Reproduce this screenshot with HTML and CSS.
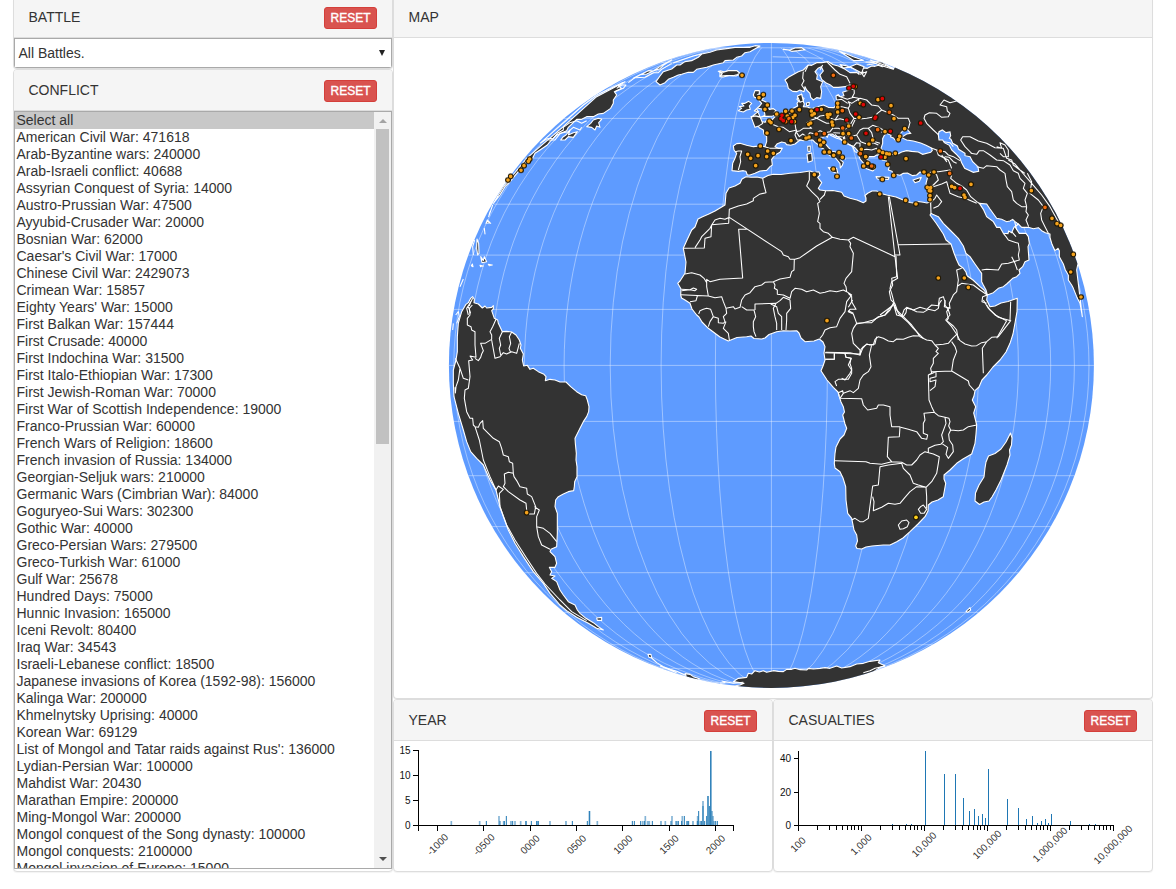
FILE: index.html
```html
<!DOCTYPE html>
<html lang="en">
<head>
<meta charset="utf-8">
<title>Battles</title>
<link rel="stylesheet" href="styles.css">
</head>
<body>
<main class="dashboard">
  <aside class="filters">
    <section class="panel panel-cut">
      <header class="panel-head head-cut"><h2>BATTLE</h2><button class="reset">RESET</button></header>
      <div class="dropdown"><span>All Battles.</span><i class="caret"></i></div>
    </section>
    <section class="panel conflict">
      <header class="panel-head"><h2>CONFLICT</h2><button class="reset">RESET</button></header>
      <div class="listbox">
        <ul class="options">
          <li class="selected">Select all</li><li>American Civil War: 471618</li><li>Arab-Byzantine wars: 240000</li><li>Arab-Israeli conflict: 40688</li><li>Assyrian Conquest of Syria: 14000</li><li>Austro-Prussian War: 47500</li><li>Ayyubid-Crusader War: 20000</li><li>Bosnian War: 62000</li><li>Caesar's Civil War: 17000</li><li>Chinese Civil War: 2429073</li><li>Crimean War: 15857</li><li>Eighty Years' War: 15000</li><li>First Balkan War: 157444</li><li>First Crusade: 40000</li><li>First Indochina War: 31500</li><li>First Italo-Ethiopian War: 17300</li><li>First Jewish-Roman War: 70000</li><li>First War of Scottish Independence: 19000</li><li>Franco-Prussian War: 60000</li><li>French Wars of Religion: 18600</li><li>French invasion of Russia: 134000</li><li>Georgian-Seljuk wars: 210000</li><li>Germanic Wars (Cimbrian War): 84000</li><li>Goguryeo-Sui Wars: 302300</li><li>Gothic War: 40000</li><li>Greco-Persian Wars: 279500</li><li>Greco-Turkish War: 61000</li><li>Gulf War: 25678</li><li>Hundred Days: 75000</li><li>Hunnic Invasion: 165000</li><li>Iceni Revolt: 80400</li><li>Iraq War: 34543</li><li>Israeli-Lebanese conflict: 18500</li><li>Japanese invasions of Korea (1592-98): 156000</li><li>Kalinga War: 200000</li><li>Khmelnytsky Uprising: 40000</li><li>Korean War: 69129</li><li>List of Mongol and Tatar raids against Rus': 136000</li><li>Lydian-Persian War: 100000</li><li>Mahdist War: 20430</li><li>Marathan Empire: 200000</li><li>Ming-Mongol War: 200000</li><li>Mongol conquest of the Song dynasty: 100000</li><li>Mongol conquests: 2100000</li><li>Mongol invasion of Europe: 15000</li>
        </ul>
        <div class="scrollbar"><i class="up"></i><b class="thumb"></b><i class="down"></i></div>
      </div>
    </section>
  </aside>
  <div class="views">
    <section class="panel panel-cut map">
      <header class="panel-head head-cut"><h2>MAP</h2></header>
      <svg class="globe" viewBox="394 38 758 660" width="758" height="660">
        <defs>
          <clipPath id="sphere"><circle cx="771.4" cy="365.4" r="322.5"/></clipPath>
          <clipPath id="lat80"><rect x="440" y="47.8" width="660" height="635.2"/></clipPath>
        </defs>
        <circle class="sea" cx="771.4" cy="365.4" r="322.5"/>
        <g class="grid" clip-path="url(#lat80)">
          <ellipse cx="771.4" cy="365.4" rx="56" ry="322.5"/><ellipse cx="771.4" cy="365.4" rx="110.3" ry="322.5"/><ellipse cx="771.4" cy="365.4" rx="161.2" ry="322.5"/><ellipse cx="771.4" cy="365.4" rx="207.3" ry="322.5"/><ellipse cx="771.4" cy="365.4" rx="247" ry="322.5"/><ellipse cx="771.4" cy="365.4" rx="279.3" ry="322.5"/><ellipse cx="771.4" cy="365.4" rx="303" ry="322.5"/><ellipse cx="771.4" cy="365.4" rx="317.6" ry="322.5"/>
        </g>
        <path class="grid" d="M771.4 43V688M449 365.4H1094M453.8 309.4H1089M453.8 421.4H1089M468.4 255.1H1074.4M468.4 475.7H1074.4M492.1 204.2H1050.7M492.1 526.6H1050.7M524.4 158.1H1018.4M524.4 572.7H1018.4M564.1 118.4H978.7M564.1 612.4H978.7M610.2 86.1H932.6M610.2 644.7H932.6M661.1 62.4H881.7M661.1 668.4H881.7M715.4 47.8H827.4M715.4 683H827.4"/>
        <g clip-path="url(#sphere)">
          <path class="land thin-line" d="M746 176.7L751 177.3 757 177 762.7 178.3 768 175.5 773.3 174.3 781 174.5 790 173.3 800 172.5 810 171 814 172.5 819 171.8 820 175 817.7 177.3 821.7 182.7 818.3 188.3 820 190 825.7 190.7 833 190.5 841.7 192.3 844 196 850 198.3 857 200 863.3 202.7 866 201 866 198 865 195.5 867.7 193.3 872 191 876.7 191 881 193.5 886.7 195 896 197 905 200.7 910 202.5 915 203.3 918 201.5 923.3 202.3 927 203 930.7 201.7 932 212 930 215 936 223 943.3 234 946 240 951 244 954 253 956.7 260 959 265 963.3 268.3 966 272 967 275.7 973 280 980 286.7 984 290 987.3 295 986.7 300 990 306.7 995 306 1001 303 1008 301.5 1017.3 298.3 1017 311.7 1015 323 1013 334 1010 343.3 1006 352 1000 360 993 367 986.7 375 982 380 979 387 975 390.7 974 396 972.3 400 975.7 406.7 973.7 413 975.5 420 976.7 425 976 434 975 443.3 971.7 454 963 459 956.7 463.3 950 470 944 475 944 479 945.7 483.3 944.5 490 943.3 496.7 938 500 932 502 928.3 505 928 511 925 516.7 918 524 910 531.7 903 538 896.7 541.7 890 545 883.3 545 872 546 866 547 861.7 549 857 548.5 855.7 546 857.5 541 856.7 535 854 530 851.7 518.3 847.7 513.3 846 500 845.7 486.7 843 478 840 471.7 835 468 834.3 463.3 835 453.3 836 447 840 439 844 435 846.7 428.3 845 424 842.7 415 844.5 412 843.3 406.7 841 402 839.3 396.7 838 392 833.3 387.3 827 380 821 370.7 823 366 825 360 824 353 825 346.7 823 342 819.3 339 814 341 805 341.7 801 338 799 333 796.7 330.7 790 331 783.3 330.7 776.7 331.7 769 334.5 765 338 761.7 339 754 338.5 751 336 746.7 336.7 737 337.5 728.3 341 720 337 708.3 328.3 702 322 699 317 696.7 315 692 309 690 303.3 685 300 681.5 298 680.7 295 681 289 677.7 283.3 680 281 685 273.3 686 262 683.3 248.3 687 240 691.7 230 695 227 698 219 702 217 708.3 214.3 715 211 725 205 726 193.3 729 188 735 186 740 183.3 742 179Z"/>
          <g transform="translate(720 40) scale(.33333)">
            <path class="land" d="M632 487L626 470 621 445 618 430 622 415 620 405 610 399 600 396 590 405 578 407 562 399 550 400 540 406 520 402 516 394 505 390 508 380 500 372 500 363 487 360 480 346 470 345 462 350 448 350 440 358 449 364 440 368 452 374 454 382 467 385 458 393 440 386 427 381 431 370 420 357 416 345 415 335 406 324 397 318 380 311 370 303 355 291 345 288 337 282 325 283 322 292 316 285 311 291 302 292 303 303 314 309 325 322 336 334 348 336 352 343 365 345 376 357 364 352 361 359 370 367 367 376 361 384 360 371 354 363 343 350 330 347 320 340 310 326 300 322 292 312 285 307 278 300 268 299 250 302 240 300 225 312 212 316 200 314 195 308 185 306 172 311 165 320 175 325 187 325 180 337 165 345 155 358 157 375 150 380 140 391 120 393 105 400 90 405 82 405 78 394 70 392 55 394 36 392 38 370 45 355 50 340 42 330 40 318 50 311 60 310 80 316 100 320 118 318 135 320 140 305 140 290 132 282 130 270 118 263 112 256 102 253 112 249 125 252 128 245 135 247 140 240 155 241 165 230 180 226 190 215 200 212 210 212 220 205 233 198 231 190 236 183 231 178 236 168 245 163 245 172 252 175 249 182 253 192 250 200 262 201 275 206 290 201 310 195 325 202 342 203 350 195 348 187 356 185 349 177 348 168 355 164 360 170 372 167 368 157 388 150 402 146 401 137 389 135 375 140 355 142 340 142 330 134 320 130 305 118 300 105 310 93 304 80 294 85 285 95 292 105 290 118 308 125 302 140 305 155 302 175 290 173 280 180 272 172 270 160 260 150 255 140 252 155 240 150 230 155 218 154 205 145 202 132 195 120 205 112 235 95 250 90 265 75 275 76 290 68 305 68 325 65 340 74 355 78 372 86 390 98 410 97 417 103 417 90 400 82 385 82 370 84 360 74 378 77 396 84 412 88 430 98 425 90 430 84 442 85 455 78 465 79 475 76 487 80 497 78 520 86 560 50 900 50 1190 500 1080 640 1070 690 1087 830 1085 818 1080 790 1070 770 1060 745 1055 735 1045 720 1045 705 1036 690 1030 672 1018 650 1018 632 1014 625 1005 632 996 613 990 592 990 582 976 578 965 572 955 563 940 566 925 562 905 562 895 552 885 560 890 568 898 580 918 580 925 590 928 610 924 620 927 660 915 665 908 680 897 690 900 700 890 710 878 715 860 732 850 740 835 745 820 758 802 765 798 750 790 735 785 725 785 700 765 672 750 650 738 640 730 618 715 595 690 570 670 550 655 530 638 523 633 520Z"/>
            <path class="land" d="M128 250L118 257 105 262 93 230 110 228 123 231 135 226 133 215 138 205 125 207 112 204 119 198 125 190 112 175 103 172 100 165 105 152 118 152 118 161 112 165 122 162 132 165 132 172 125 180 138 186 142 195 148 208 160 206 168 212 163 218 168 225 158 228 145 229 132 229 120 232 106 228 95 231 108 220 116 214 103 213 110 206Z M55 212L65 205 58 200 72 198 65 190 75 190 86 184 95 190 88 198 91 208 80 210 70 216Z M232 168L245 163 250 183 240 187Z M259 189L268 187 267 196 260 197Z M263 319L271 318 270 335 264 334Z M261 343L275 339 277 362 264 367Z M325 383L350 385 354 401 335 394Z M579 420L604 412 598 424 585 428Z M468 410L507 412 505 418 472 417Z M0 92L12 95 25 92 38 95 50 92 62 102 48 108 30 106 10 111 0 110Z M190 28L210 30 225 24 245 23 255 29 235 32 215 34 205 30Z M358 34L380 42 400 50 430 61 402 62 380 48Z M390 80L425 99 432 80 410 72Z M438 66L460 68 480 75 500 82 520 88 485 65Z"/>
            <path class="lake" d="M483 325L488 310 488 296 493 286 500 280 513 286 512 291 520 294 528 303 535 303 533 298 543 292 560 300 580 303 602 309 618 316 634 324 637 331 632 337 608 343 595 336 575 334 560 332 545 336 535 341 520 344 505 340 497 341Z M540 282L548 273 562 268 565 272 572 280 560 282 548 290Z M655 284L657 275 667 270 678 278 690 276 692 287 688 295 693 298 698 310 712 318 716 328 735 340 735 347 750 350 758 365 774 380 776 394 760 397 745 390 734 385 725 368 720 355 708 342 695 330 688 316 673 308 668 300 657 300Z M778 490L800 492 810 507 830 535 845 538 860 545 870 543 878 538 885 545 895 552 882 562 875 578 866 573 864 581 850 580 840 562 830 562 820 545 800 530 790 508Z"/>
            <path class="border" d="M45 335L55 333 65 333 60 350 62 365 55 390M135 320L148 325 165 325 187 325M140 245L155 252 175 260 190 262 208 275 230 270 225 285 232 300 245 300M180 225L188 235 200 240 210 247 225 250 228 270M220 205L215 215 205 225 205 245M275 206L272 225 290 235 275 240 260 248 267 258 275 265 250 265 240 272 228 275 238 290 248 282 260 290 270 278 285 282 300 272 315 278 330 275 338 265 335 250 320 250 310 245 290 235 300 228 320 225 332 235 345 240 360 236 375 240 390 255 380 265 370 270 355 265 340 265M345 200L350 212 355 225 345 240M342 200L365 200 385 205 390 220 402 235 420 237 440 235 465 230 472 220 485 210 475 198 455 195 450 190 440 180 420 175 408 182 395 190 385 185 390 195 385 205M390 255L402 235M340 278L370 280 390 290 410 285 420 270 430 265 445 265 455 278 458 290 465 305 480 310M410 285L422 305 440 312 460 308 475 315M370 270L372 282 375 300 385 312 400 320 410 308 420 310 420 322 425 330 440 328 455 330 470 325 475 345M330 285L350 295 360 298 372 305 370 290M397 318L405 335 415 338 425 330M345 283L352 290 370 290M445 265L458 256 475 262 490 270 485 278M405 240L395 260M485 210L505 218 520 225 535 235 565 235 570 248 565 265M350 165L365 172 382 178 400 172 415 175 418 190M352 180L365 178 383 190M402 146L403 160 395 175M308 75L300 90M320 65L345 90 360 103 380 110 385 120 390 130M250 95L248 115 252 122 245 135 255 150M265 75L255 95M620 405L635 395 655 395 690 390 695 405 692 415 710 430 725 438 740 450 752 470 770 485 778 490M640 395L650 405 655 420 640 435 630 440M634 324L650 330 655 345 665 350 685 360 690 372 695 385M650 330L675 335 685 345 700 350 720 362M675 350L688 352 700 365 710 370M665 345L680 365 672 350M632 487L645 475 650 465 665 485 655 498 640 505M625 455L640 440 665 432 680 425 690 460 715 470 735 475 770 490M770 380L790 385 800 377 830 380 840 390 855 400 858 420 862 440 875 455 880 480 890 490 905 500 920 500 918 515 925 525 918 540 926 560M752 340L770 343 778 332 790 332 810 345 830 360 850 362 870 375 880 392 895 400 900 415 915 430 910 445 922 460 915 480 920 500M755 340L735 320 722 300 728 290 750 290 775 303 800 310 825 323 850 325 855 340 860 355 875 360 880 375 900 390 915 400M700 320L690 308 672 305M655 284L640 270 620 250 612 235 615 225 628 218 650 220 665 232 685 230 690 220 682 213 680 200 660 195 672 180 690 188 710 183 740 200 760 217 795 240M922 400L935 425 930 460 955 480 970 500 962 520 965 540 975 560 985 580M865 360L885 372 900 390 935 430 965 465 990 500 1015 545 1020 560M830 320L845 325 840 308 855 315 865 330 865 350 850 350 840 340M785 690L800 688 835 690 845 672 865 670 898 660 895 645 898 630 895 610 880 605 865 600 858 590 850 580M875 575L888 590M875 650L885 670 892 690M890 570L884 545M420 103L440 95 432 110 425 99M440 75L470 70M450 60L520 85"/>
            <path class="border faint" d="M158 50L310 55M0 45Q80 12 120 22"/>
          </g>
          <g class="border" transform="translate(640 160) scale(.33333)">
            <path d="M368 55L372 75 378 98 358 103 340 115 340 122 320 132 295 138 268 148 266 190 215 194 213 230 195 235 193 264 130 265M268 172L255 178 240 175 225 180 215 195 210 205 195 220 185 230 180 240 165 263M268 172L425 275 430 285 445 290 450 298 465 298 480 293 530 258 577 232 565 220 550 215 540 205 540 190 533 185 538 160 533 130 540 125 533 112 515 95 500 78 508 60 508 35M540 118L553 105 557 92M320 208L296 208 308 354 240 358 210 365 200 358 200 380 205 408 225 413 245 410 250 425 258 445 280 440 285 447 300 442 305 420 315 405 330 398 345 380 365 375 375 367 400 365 420 357 450 352 455 335 462 330 463 298M135 342L155 338 180 345 192 355 200 368M124 388L150 389 160 384 170 388 165 392 150 389 125 392M122 404L205 408M150 425L168 422 172 408M176 462L180 452 190 448 200 445 212 448 220 470 210 485 205 500M220 470L235 475 235 488 250 490 255 485 250 470 260 460 258 445M258 485L250 505 265 520 268 540M305 440L320 450 342 450 347 470 340 485 340 500 342 515 348 530M345 450L345 432 408 430 400 445 405 470 410 490 410 510M392 432L410 440 415 460 425 470 425 510M438 510L440 480 440 460 452 445 450 420 430 412 420 422 408 430M400 365L405 375 403 385 412 390 412 403 430 405 450 415 455 395 465 385 485 388 500 395 520 390 540 400 555 397 570 392 590 395 610 390 620 395 618 380 612 370 618 355 635 335 640 280 630 260 632 250 625 240 600 238 577 232M625 240L640 232 765 290 745 110M765 290L773 355 755 365 750 385 755 400 763 430M620 395L635 405 620 425 615 455 600 475 590 500 570 503 555 510 548 525 540 535M625 400L635 410 635 425 648 448 630 448 625 455 640 462 650 490M650 490L670 488 700 480 715 472 735 465 745 450 763 430M650 490L640 505 635 520 640 550 660 570 660 585 668 565 680 552 690 555 705 552 710 530M555 578L660 582M555 598L583 598 583 578M615 580L618 592 634 595 625 615 635 630 630 640 615 660 605 655"/>
          </g>
          <g class="border" transform="translate(800 300) scale(.33333)">
            <path d="M77 157L150 158 180 165 183 148 190 140 200 133 220 135 225 118 235 110 250 115 265 123 280 125 290 117 310 118 325 112 340 107 358 108M145 22L158 0M160 40L145 32M168 72L190 68 215 68 235 50 255 45 270 30 280 10 290 30 310 50 335 75 350 95 360 110 380 120 395 122 405 135 430 133 445 130 455 118 470 103 480 122 495 132 515 138 530 137 545 128 560 125 575 112 595 110 632 62 595 52 565 25 550 0M280 10L290 45 310 50 318 38 320 25 335 28 350 35 370 37 385 28 405 32 415 25 418 10 425 0M435 0L435 15 445 30 450 45 437 60 455 80 470 103M215 135L208 165 213 200 205 215 190 225 180 240 175 265 160 278 150 272 130 280 120 295 185 296 190 315 203 330 230 325 235 315 250 315 270 320 270 345 275 380 300 380 298 410 265 412 262 470 275 485 245 493 210 490 198 485 105 482M77 178L103 178 103 157M135 160L138 172 153 175 150 190 155 205 155 220 145 238 115 238 105 245 110 258M118 290L115 278 128 272 130 282M405 135L415 145 408 155 415 160 400 175 400 190 392 205 395 220 385 225 387 300 395 320 403 337 372 340 375 360 370 370 370 400 383 405 380 418 365 415 350 395 325 388 302 382M455 125L465 140 470 155 460 180 455 213 395 215M455 213L505 243 508 255 523 272M560 125L547 145 550 220M385 225L408 215 408 230 390 235 390 245 408 240 405 260 390 272M403 337L415 347 435 352 438 370 425 405 430 425 422 433 405 436 385 445 385 460M435 352L447 355 450 365 446 378 452 390 475 392 490 390 505 380 530 375M452 390L446 403 448 420 458 435 460 455 445 475 438 463 443 442 425 430M262 470L275 485 305 487 320 495 335 495 350 480 360 465 375 455 400 462 418 470 415 490 410 520 395 545 378 562 355 555 340 550 330 525 310 505 305 490 265 495 240 500 235 555 218 558 205 655 190 665 180 665 165 655 155 660M218 590L222 605 220 632 245 622 265 610 285 613 300 610 315 592 330 575 350 560 378 562 380 590 380 625M355 628L362 620 370 615 380 628 372 640 362 640ZM295 675L305 663 320 660 327 668 322 680 310 686 300 688Z"/>
          </g>
          <g class="border" transform="translate(880 40) scale(.33333)">
            <path d="M55 614L213 612M28 470L60 645 43 645M48 648L50 710 35 715 38 735 28 755 33 780 45 792 55 820 65 830 72 810 80 802 100 810 120 802 140 808 155 795 175 797 178 775 190 770 195 785 193 800 210 805 208 790 220 765 230 755 235 720 230 690 245 685M233 738L245 730 260 732 280 735 300 750 322 765M210 800L200 815 205 835 200 842 220 858 230 870 235 900M320 795L330 810 345 825 380 842M40 795L20 810 0 825M65 830L85 848 100 865 130 895M380 842L350 895M392 785L390 842M322 765L308 770 306 785 320 790"/>
          </g>
          <g transform="translate(440 280) scale(.33333)">
            <path class="land" d="M78 73L85 68 92 55 98 50 103 58 102 68 115 72 127 84 135 78 140 84 155 82 160 77 160 87 155 92 163 115 173 120 175 130 187 155 200 154 215 156 228 165 238 180 243 195 241 205 250 222 247 240 251 258 262 256 270 268 280 265 295 275 312 283 318 290 316 302 330 298 345 300 360 306 378 306 392 320 410 335 425 344 437 347 442 360 447 380 446 395 440 410 430 425 420 445 405 475 406 490 409 520 408 540 411 560 411 590 404 605 403 620 401 632 385 635 370 642 355 650 347 660 345 680 352 700 352 720 352 760 350 800 333 808 330 815 345 830 350 850 345 862 328 862 335 875 330 885 345 888 335 895 350 905 360 930 370 945 385 965 405 975 412 990 420 1000 438 1015 460 1028 475 1040 490 1050 470 1045 445 1030 410 1012 380 992 360 975 330 940 310 910 280 875 250 830 225 790 205 750 190 710 180 680 168 630 150 600 130 555 110 535 92 515 80 485 70 450 55 400 42 350 40 310 40 270 48 240 52 215 52 170 55 130 65 95Z M470 1014L485 1012 485 1021 472 1021Z"/>
            <path class="border" d="M97 75L88 85 90 105 82 115 82 135 93 140 95 150 105 155 105 195 108 232 90 228 98 240 86 242 90 290 85 325 75 330 73 355 80 395 90 415 98 415 100 435 105 440 115 442 120 430 128 422 130 445 145 460 160 475 178 485 185 505 190 525 205 530 208 545 218 550 220 580 205 577 193 582 195 610 190 620 205 635 240 660 258 670 260 690 268 702 283 702 287 680 275 650 262 642 260 625 240 620 232 605 222 590 220 580M105 235L115 242 122 232 125 222 130 212 122 190 135 190 155 178 155 165 150 155 158 140 168 118M155 180L165 235 180 230 190 218 200 222 215 215 230 220 238 190M187 155L178 175 182 195 178 205 182 225M215 156L208 170 212 190 207 205 212 218M46 235L60 265 70 295 85 300M46 340L48 320 55 300 60 265M105 440L118 480 130 540 150 590 168 630 175 618 190 628 178 640 180 680 200 735 225 780 260 835 290 880 315 912 360 960 395 995 440 1022M283 680L298 690 290 710 290 740 310 745 330 760 350 785M290 740L295 770 305 795 330 808M45 322L46 340M88 78L92 65"/>
          </g>
          <g transform="translate(440 40) scale(.33333)">
            <path class="land" d="M960 18L945 17 930 22 905 22 885 22 865 25 830 30 810 37 785 42 775 52 755 62 735 65 720 75 710 75 695 87 670 95 660 108 648 125 660 135 675 128 685 118 700 112 715 105 725 103 745 97 760 97 770 88 800 82 820 75 850 68 855 62 880 60 890 52 905 48 915 38 930 35Z M835 94L850 97 865 92 890 92 900 100 890 104 880 107 860 107 840 108 847 101Z M580 115L600 104 620 102 640 93 625 92Z M640 93L660 86 670 76 695 60 665 76Z M160 490L190 440 260 355 300 320 370 260 470 170 555 125 535 138 545 145 523 155 530 165 520 180 520 190 512 205 490 220 475 222 460 230 440 230 425 238 410 238 385 262 380 272 350 285 330 305 322 315 300 330 285 340 275 360 260 365 235 395 210 425 195 440 180 465Z M362 300L370 290 378 285 390 270 385 285 400 278 412 275 400 292 385 290 375 300Z M440 260L452 250 460 240 475 235 485 238 476 248 480 262 470 258 465 270 455 262Z M111 597L116 610 117 640 113 645 110 625Z M122 650L130 662 133 650 140 665 126 668Z M142 540L152 550 146 548 138 550Z M133 565L135 582Z M97 672L99 680 94 677Z M120 676L130 678 122 680Z M145 673L157 675 148 677Z"/>
            <path class="border" d="M300 310L322 296 340 295 352 280 370 270 370 262 390 248 410 242 425 250 440 242M325 300L345 300 360 280 385 275 400 262 420 270 425 262M530 145L545 135 558 135 550 145 525 155M565 128L585 113 615 112 640 98 655 98 665 88 695 70M700 68L760 48 785 42M300 310L340 275 380 240 430 195 470 165 550 127M150 515L146 530 158 495M70 717L60 740M47 825L55 815 58 830 50 850M85 825L80 805 93 785 98 775M85 800L92 820M40 850L38 870M100 645L98 620 104 600"/>
          </g>
          <path class="land" d="M1010.5 433L1012 438 1011.5 445 1009.5 450 1010 455 1007 465 1001 480 996 490 992 497 989 501 984 502 979.5 504.5 975 501 975.5 493 979 485 984 477 985 468 986 462 988.5 456 995 453.5 1001 449 1006 442Z"/>
          <g transform="translate(640 560) scale(.33333)">
            <path class="land" d="M280 365L295 355 320 352 325 340 335 342 345 332 358 336 370 332 380 337 400 332 415 334 430 335 440 328 455 328 465 325 480 329 500 330 505 325 520 327 540 325 555 323 570 325 590 318 605 324 630 320 650 312 670 310 690 304 720 300 715 308 735 317 720 322 680 350 600 390 200 390 300 375 312 370Z M135 341L150 343 160 350 178 356 165 364 140 352Z M24 283L33 283 35 294 27 292Z M978 154L990 143 992 150 983 157Z"/>
            <path class="border" d="M35 294L50 308 70 320 90 328 110 334 135 345M60 318L110 338M245 362L255 368 240 370M250 364L280 370 310 367M670 338L690 332 705 325 735 318"/>
          </g>
        </g>
        <g class="dots">
          <g transform="translate(720 40) scale(.33333)">
            <path d="M66 106h0M130 164h0M117 173h0M142 195h0M135 208h0M148 243h0M153 248h0M141 279h0M177 268h0M213 302h0M121 318h0M143 333h0M160 340h0M140 350h0M114 347h0M92 355h0M83 343h0M107 377h0M170 222h0M197 214h0M216 213h0M238 209h0M202 228h0M218 233h0M225 226h0M223 245h0M274 213h0M283 221h0M304 208h0M276 225h0M353 190h0M353 201h0M353 216h0M330 223h0M322 224h0M324 232h0M336 246h0M338 255h0M266 253h0M272 249h0M267 291h0M258 294h0M299 300h0M311 307h0M302 315h0M313 336h0M328 336h0M341 346h0M357 338h0M367 352h0M340 387h0M351 409h0M283 404h0M386 258h0M369 281h0M386 281h0M374 306h0M424 328h0M447 312h0M437 350h0M443 370h0M431 378h0M460 380h0M487 418h0M521 406h0M503 373h0M558 356h0M477 333h0M488 338h0M500 341h0M508 342h0M526 340h0M495 352h0M458 300h0M554 266h0M539 289h0M535 299h0M495 275h0M417 232h0M421 190h0M405 140h0M474 179h0M513 197h0M522 236h0M612 396h0M626 405h0M642 396h0M479 462h0M557 481h0M588 492h0M622 442h0M632 443h0M628 452h0M632 453h0M630 467h0M630 479h0M753 433h0M695 439h0M732 465h0M735 472h0M704 443h0M655 714h0M733 714h0M745 742h0M934 452h0M996 535h0M1011 551h0M1022 556h0M1060 643h0M1052 696h0M1083 771h0"/>
            <path class="warm" d="M340 106h0M197 245h0M207 236h0M289 282h0M313 281h0M368 264h0M394 294h0M367 212h0M421 341h0M455 378h0M473 269h0M508 217h0M661 333h0M689 400h0M975 502h0"/>
            <path class="hot" d="M387 144h0M400 139h0M186 226h0M183 236h0M190 242h0M215 245h0M291 209h0M380 240h0M430 194h0M487 176h0M407 222h0M467 231h0M465 235h0M438 280h0M483 351h0M511 274h0M602 249h0M720 445h0"/>
          </g>
          <path transform="translate(440 40) scale(.33333)" d="M269 357h0M265 364h0M252 377h0M243 391h0M212 409h0M204 420h0"/>
          <path transform="translate(800 300) scale(.33333)" d="M81 62h0"/>
          <path class="yellow" transform="translate(800 300) scale(.33333)" d="M348 652h0"/>
          <path transform="translate(440 280) scale(.33333)" d="M260 698h0"/>
        </g>
      </svg>
    </section>
    <div class="charts">
      <section class="panel">
        <header class="panel-head"><h2>YEAR</h2><button class="reset">RESET</button></header>
        <svg class="chart" viewBox="394 741 378 129" width="378" height="129">
          <g transform="translate(394 690) scale(.33333)">
            <path class="bar soft" d="M172 393V406M257 393V406M315 378V406M380 393V406M396 393V406M430 393V406M468 393V406M586 363V406M610 393V406M754 378V406M761 393V406M746 393V406M766 393V406M814 393V406M834 378V406M865 378V406M927 333V406M911 378V406M942 318V406M951 183V406M957 378V406M363 393V406M329 393V406M849 393V406M880 393V406M919 393V406"/>
            <path class="bar" d="M277 393V406M318 393V406M331 393V406M337 378V406M351 393V406M356 393V406M396 393V406M412 393V406M428 393V406M433 393V406M516 393V406M535 393V406M580 393V406M587 363V406M715 393V406M721 393V406M740 393V406M751 393V406M775 393V406M801 393V406M831 393V406M846 393V406M853 393V406M863 393V406M871 378V406M879 393V406M884 393V406M897 393V406M910 393V406M914 363V406M922 393V406M927 348V406M932 393V406M938 378V406M942 318V406M946 348V406M950 183V406M954 363V406M960 393V406M965 393V406M970 393V406"/>
          </g>
          <path class="axis" d="M412.5 750.5H418.5V825.5H412.5M412.5 775.5H418.5M412.5 800.5H418.5M418.5 831V825.5H733.5V831M437.5 825V831M483.5 825V831M530.5 825V831M576.5 825V831M622.5 825V831M669.5 825V831M715.5 825V831"/>
          <g class="ylab"><text x="410.5" y="754">15</text><text x="410.5" y="779">10</text><text x="410.5" y="804">5</text><text x="410.5" y="829">0</text></g>
          <g class="xlab"><text transform="translate(437.5 844.5) rotate(-45)" y="3.5">-1000</text><text transform="translate(483.8 844.5) rotate(-45)" y="3.5">-0500</text><text transform="translate(530 844.5) rotate(-45)" y="3.5">0000</text><text transform="translate(576.5 844.5) rotate(-45)" y="3.5">0500</text><text transform="translate(622.8 844.5) rotate(-45)" y="3.5">1000</text><text transform="translate(669 844.5) rotate(-45)" y="3.5">1500</text><text transform="translate(715.5 844.5) rotate(-45)" y="3.5">2000</text></g>
        </svg>
      </section>
      <section class="panel">
        <header class="panel-head"><h2>CASUALTIES</h2><button class="reset">RESET</button></header>
        <svg class="chart" viewBox="774 741 378 129" width="378" height="129">
          <defs><path id="decade" d="M.5 0V6M19.5 0V5M31.5 0V5M38.5 0V5M44.5 0V5M49.5 0V5M53.5 0V5M56.5 0V5M60.5 0V5"/></defs>
          <path class="bar crisp" d="M892.5 824V825M906.5 824V825M911.5 824V825M925.5 751V825M944.5 774V825M955.5 774V825M963.5 798V825M969.5 811V825M974.5 809V825M978.5 816V825M982.5 814V825M985.5 818V825M988.5 769V825M1007.5 799V825M1018.5 808V825M1026.5 819V825M1032.5 816V825M1037.5 823V825M1041.5 821V825M1045.5 819V825M1048.5 823V825M1051.5 814V825M1070.5 821V825M1089.5 824V825M1095.5 824V825"/>
          <g class="axis"><path d="M798.5 751V825.5H1113.5V831M794 758.5H798.5M794 792.5H798.5M794 825.5H798.5"/><use href="#decade" x="798" y="825"/><use href="#decade" x="861" y="825"/><use href="#decade" x="924" y="825"/><use href="#decade" x="987" y="825"/><use href="#decade" x="1050" y="825"/></g>
          <g class="ylab"><text x="791" y="762">40</text><text x="791" y="796">20</text><text x="791" y="829">0</text></g>
          <g class="xlab"><text transform="translate(798 844.5) rotate(-45)" y="3.5">100</text><text transform="translate(861 844.5) rotate(-45)" y="3.5">1,000</text><text transform="translate(924 844.5) rotate(-45)" y="3.5">10,000</text><text transform="translate(987 844.5) rotate(-45)" y="3.5">100,000</text><text transform="translate(1050 844.5) rotate(-45)" y="3.5">1,000,000</text><text transform="translate(1113 844.5) rotate(-45)" y="3.5">10,000,000</text></g>
        </svg>
      </section>
    </div>
  </div>
</main>
</body>
</html>
```
FILE: styles.css
```css
* { box-sizing: border-box; }
body { margin: 0; height: 889px; overflow: hidden; background: #fff; color: #333; font: 14px/17px "Liberation Sans", Arial, sans-serif; }
.dashboard { display: grid; grid-template-columns: 380px 760px; height: 872px; padding-left: 13px; width: 1153px; }
.filters, .views { display: flex; flex-direction: column; min-height: 0; }
.panel { border: 1px solid #ddd; border-radius: 4px; background: #fff; overflow: hidden; box-shadow: 0 1px 1px rgba(0,0,0,.05); display: flex; flex-direction: column; }
.panel-cut { border-top: 0; border-radius: 0 0 4px 4px; flex: none; }
.panel-head { display: flex; align-items: center; justify-content: space-between; flex: none; height: 41px; padding: 0 15px 0 14.5px; background: #f5f5f5; border-bottom: 1px solid #ddd; }
.head-cut { height: 38px; padding-bottom: 3px; }
.panel-head h2 { margin: 0; font-size: 14px; font-weight: 400; line-height: 20px; }
.reset { width: 53px; height: 22px; margin-top: 1px; padding: 0; border: 1px solid #d43f3a; border-radius: 3px; background: #d9534f; color: #fff; font: 12px/18px "Liberation Sans", Arial, sans-serif; -webkit-text-stroke: .35px #fff; }
.dropdown { display: flex; align-items: center; justify-content: space-between; height: 30px; padding: 0 6px 0 3.5px; border: 1px solid #a9a9a9; }
.caret { border: 3.5px solid transparent; border-top: 6px solid #222; border-bottom: 0; }
.conflict { flex: 1; min-height: 0; }
.listbox { flex: 1; min-height: 0; display: flex; border: 1px solid #a9a9a9; margin-bottom: 2px; overflow: hidden; }
.options { flex: 1; margin: 0; padding: 0; list-style: none; }
.options li { height: 17px; padding-left: 1.5px; white-space: nowrap; }
.options .selected { background: #c8c8c8; }
.scrollbar { width: 17px; background: #f1f1f1; display: flex; flex-direction: column; align-items: center; }
.up { margin: 7px 0 6px; border: 4px solid transparent; border-bottom-color: #a3a3a3; border-top: 0; }
.thumb { width: 13px; height: 315px; background: #c1c1c1; }
.down { margin: auto 0 7px; border: 4px solid transparent; border-top-color: #505050; border-bottom: 0; }
.map { height: 699px; }
.globe, .chart { display: block; flex: none; }
.charts { display: grid; grid-template-columns: 1fr 1fr; height: 173px; }
.sea { fill: #5e9bff; }
.grid { fill: none; stroke: #fff; stroke-opacity: .4; stroke-width: 1; }
.land { fill: #333; stroke: #fff; stroke-width: 3.3; stroke-linejoin: round; }
.globe > g > .land { stroke-width: 1.1; }
.lake { fill: #5e9bff; stroke: #fff; stroke-width: 3.3; }
.border { fill: none; stroke: #fff; stroke-width: 3.2; stroke-linejoin: round; }
.faint { stroke-opacity: .5; }
.dots path { fill: none; stroke: #f5a21c; stroke-width: 11; stroke-linecap: round; filter: drop-shadow(2px 0 0 #221800) drop-shadow(-2px 0 0 #221800) drop-shadow(0 2px 0 #221800) drop-shadow(0 -2px 0 #221800); }
.dots .warm { stroke: #f06a10; }
.dots .hot { stroke: #e00606; }
.dots .yellow { stroke: #ffd21c; }
.axis { fill: none; stroke: #000; shape-rendering: crispEdges; }
.bar { stroke: #1f77b4; stroke-width: 3; }
.soft { stroke-opacity: .55; stroke-width: 5; }
.crisp { stroke-width: 1; shape-rendering: crispEdges; }
.ylab, .xlab { font-size: 10px; fill: #111; text-anchor: end; }
.xlab { fill: #333; text-anchor: middle; }
```
